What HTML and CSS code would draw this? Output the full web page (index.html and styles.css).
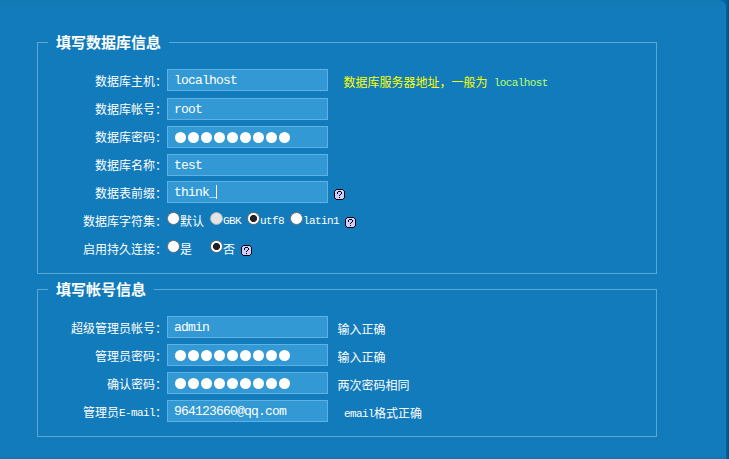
FILE: index.html
```html
<!DOCTYPE html>
<html lang="zh-CN">
<head>
<meta charset="utf-8">
<title>安装</title>
<link rel="stylesheet" href="styles.css">
</head>
<body>
<svg class="defs" width="0" height="0"><defs>
<g id="help"><path d="M2 0h7v1h1v1h1v7h-1v1H9v1H2v-1H1V9H0V2h1V1h1z" fill="#000"/><path d="M2 1h7v1h1v7H9v1H2V9H1V2h1z" fill="#ccccff"/><path d="M4 2h3v1H4zM3 3h1v2H3zM7 3h1v2H7zM6 5h1v1H6zM5 6h1v1H5zM5 8h1v1H5z" fill="#000"/></g>
</defs></svg>
<main class="panel">
<fieldset class="group">
<legend>填写数据库信息</legend>
<div class="row"><span class="label">数据库主机：</span><span class="field">localhost</span><span class="hint tip">数据库服务器地址，一般为 <span class="latin">localhost</span></span></div>
<div class="row lower"><span class="label high">数据库帐号：</span><span class="field">root</span></div>
<div class="row"><span class="label high">数据库密码：</span><span class="field dots"><i></i><i></i><i></i><i></i><i></i><i></i><i></i><i></i><i></i></span></div>
<div class="row"><span class="label high">数据库名称：</span><span class="field">test</span></div>
<div class="row upper"><span class="label">数据表前缀：</span><span class="field">think_<b class="caret"></b></span><svg class="help" viewBox="0 0 11 11"><use href="#help"/></svg></div>
<div class="row"><span class="label">数据库字符集：</span><span class="choice"><i class="radio"></i>默认</span><span class="choice"><i class="radio off"></i><span class="latin">GBK</span></span><span class="choice"><i class="radio on"></i><span class="latin">utf8</span></span><span class="choice"><i class="radio"></i><span class="latin">latin1</span></span><svg class="help near" viewBox="0 0 11 11"><use href="#help"/></svg></div>
<div class="row"><span class="label">启用持久连接：</span><span class="choice yes"><i class="radio"></i>是</span><span class="choice"><i class="radio on"></i>否</span><svg class="help near" viewBox="0 0 11 11"><use href="#help"/></svg></div>
</fieldset>
<fieldset class="group">
<legend>填写帐号信息</legend>
<div class="row"><span class="label">超级管理员帐号：</span><span class="field">admin</span><span class="hint">输入正确</span></div>
<div class="row"><span class="label">管理员密码：</span><span class="field dots"><i></i><i></i><i></i><i></i><i></i><i></i><i></i><i></i><i></i></span><span class="hint">输入正确</span></div>
<div class="row"><span class="label">确认密码：</span><span class="field dots"><i></i><i></i><i></i><i></i><i></i><i></i><i></i><i></i><i></i></span><span class="hint">两次密码相同</span></div>
<div class="row"><span class="label">管理员<span class="latin">E-mail</span>：</span><span class="field">964123660@qq.com</span><span class="hint mail"><span class="latin">email</span>格式正确</span></div>
</fieldset>
</main>
</body>
</html>
```
FILE: styles.css
```css
* { box-sizing: border-box; }
body {
  margin: 0;
  height: 459px;
  overflow: hidden;
  background: linear-gradient(90deg, #00659f 726px, #005088 729px);
  color: #fff;
  font: 12px/16px "Noto Sans CJK SC", sans-serif;
}
.defs { position: absolute; }
.panel {
  width: 726px;
  height: 459px;
  padding: 32px 0 0 37px;
  border-radius: 0 7px 0 0;
  background: linear-gradient(#117ab5, #127bbb 10px, #127bbb 456px, #1075b2);
}
.group {
  width: 620px;
  margin: 0 0 5px;
  padding: 14px 0 11px;
  border: 1px solid #5ba8d6;
}
.group legend {
  margin-left: 10px;
  padding: 0 8px;
  font-size: 15px;
  font-weight: 700;
  line-height: 20px;
}
.row {
  display: flex;
  align-items: center;
  height: 28px;
  white-space: nowrap;
}
.lower { margin-top: 1px; }
.upper { margin-top: -1px; }
.label {
  width: 129px;
  padding-top: 1px;
  text-align: right;
}
.high { padding-top: 0; }
.latin {
  font-family: "Liberation Mono", monospace;
  font-size: 11px;
  line-height: 1;
  letter-spacing: -0.6px;
  position: relative;
  top: -1px;
}
.field {
  display: flex;
  align-items: center;
  width: 161px;
  height: 22px;
  padding: 2px 6px 0;
  border: 1px solid #5cb1e5;
  background: #3399d4;
  font: 13px/18px "Liberation Mono", monospace;
  letter-spacing: -0.8px;
}
.caret { width: 1px; height: 14px; margin-top: -2px; background: #fff; }
.dots { gap: 2px; padding: 0 7px; }
.dots i { width: 11px; height: 11px; border-radius: 50%; background: #fff; }
.hint { margin-left: 9.5px; padding-top: 4px; }
.tip { margin-left: 15.5px; padding-top: 3px; color: #ff0; word-spacing: 3.5px; }
.tip .latin { color: #b9ff68; }
.mail { margin-left: 16px; padding-top: 3px; }
.choice { display: flex; align-items: center; margin-right: 6px; padding-top: 2px; }
.choice .latin { padding-top: 2px; }
.choice.yes { margin-right: 18px; }
.radio {
  width: 13px;
  height: 13px;
  margin-top: -6px;
  border: 1px solid #6c7072;
  border-radius: 50%;
  background: #fff;
}
.radio.on { background: radial-gradient(circle, #222 3.2px, #fff 3.9px); }
.radio.off { border-color: #aab4ba; background: #e4e4e4; }
.help { width: 11px; height: 11px; margin: 4px 0 0 6px; }
.help.near { margin-left: 0; }
```
